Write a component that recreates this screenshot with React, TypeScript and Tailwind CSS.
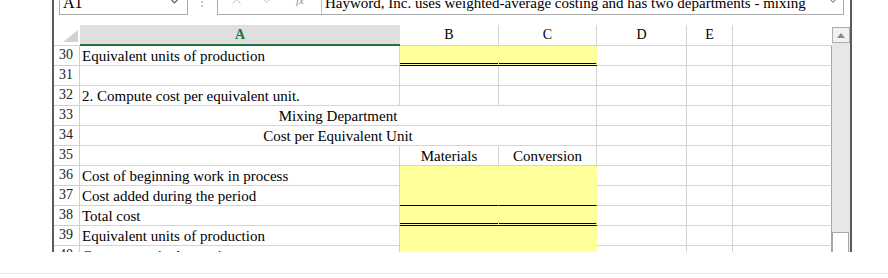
import React from 'react';
import { Check, ChevronDown, X } from 'lucide-react';

// yellow input cells, bottom edge variants
type Edge = 'fill' | 'single' | 'double';

const edgeClass: Record<Edge, string> = {
  fill: 'border-b border-b-[#ffff9c]',
  single: 'border-b border-b-black',
  double: 'border-b-[3px] border-double border-b-black',
};

function RowNum({ n }: { n: number }) {
  return (
    <div className="w-[26px] shrink-0 border-r border-b border-[#cfcfcf] pl-[5px] text-[14px] leading-[17px] text-[#222]">
      {n}
    </div>
  );
}

function Tail() {
  return (
    <>
      <div className="w-[90px] shrink-0 border-r border-b border-[#d4d4d4]" />
      <div className="w-[46px] shrink-0 border-r border-b border-[#d4d4d4]" />
      <div className="w-[99px] shrink-0 border-r border-b border-r-[#a6a6a6] border-b-[#d4d4d4]" />
    </>
  );
}

function Row({ n, children }: { n: number; children: React.ReactNode }) {
  return (
    <div className="flex h-[20px] shrink-0">
      <RowNum n={n} />
      {children}
      <Tail />
    </div>
  );
}

function LabelCell({ text }: { text?: string }) {
  return (
    <div className="w-[320px] shrink-0 whitespace-nowrap border-r border-b border-[#d4d4d4] pl-[2px] text-[15px] leading-[20px]">
      {text}
    </div>
  );
}

function BlankBC() {
  return (
    <>
      <div className="w-[99px] shrink-0 border-r border-b border-[#d4d4d4]" />
      <div className="w-[98px] shrink-0 border-r border-b border-[#d4d4d4]" />
    </>
  );
}

function InputBC({ edge }: { edge: Edge }) {
  return (
    <>
      <div className={`w-[99px] shrink-0 bg-[#ffff9c] border-r border-r-[#ffff9c] ${edgeClass[edge]}`} />
      <div className={`w-[98px] shrink-0 bg-[#ffff9c] border-r border-r-[#ffff9c] ${edgeClass[edge]}`} />
    </>
  );
}

function Toolbar() {
  return (
    <div className="flex h-[15px] shrink-0 items-end overflow-hidden">
      <div className="ml-[5px] flex h-[26px] w-[129px] shrink-0 items-end justify-between border border-[#ababab] pl-[3px] pr-[7px]">
        <span className="pb-[3px] text-[16px] leading-none">A1</span>
        <ChevronDown className="mb-[7px] text-[#555]" size={11} strokeWidth={2.5} />
      </div>
      <div className="ml-[12px] flex h-[15px] w-[3px] shrink-0 flex-col items-center gap-[2px] pt-[1px]">
        <div className="h-[2px] w-[2px] bg-[#c4c4c4]" />
        <div className="h-[2px] w-[2px] bg-[#c4c4c4]" />
      </div>
      <div className="ml-[14px] flex h-[26px] w-[627px] shrink-0 items-end border border-[#ababab]">
        <X className="mb-[7px] ml-[11px] text-[#bdbdbd]" size={15} strokeWidth={1.5} />
        <Check className="mb-[7px] ml-[17px] text-[#bdbdbd]" size={15} strokeWidth={1.5} />
        <span className="mb-[8px] ml-[20px] text-[11px] italic leading-none text-[#8a8a8a]">fx</span>
        <div className="ml-[17px] flex h-full flex-1 items-end overflow-hidden border-l border-[#c4c4c4] pl-[3px]">
          <span className="flex-1 whitespace-nowrap pb-[3px] text-[15px] leading-none">
            Hayword, Inc. uses weighted-average costing and has two departments - mixing
          </span>
          <ChevronDown className="mb-[8px] mr-[5px] shrink-0 text-[#777]" size={10} strokeWidth={2.5} />
        </div>
      </div>
    </div>
  );
}

function HeaderRow() {
  return (
    <div className="flex h-[21px] shrink-0 text-[14px] leading-[20px]">
      <div className="w-[26px] shrink-0 border-b border-[#d4d4d4]">
        <svg width="26" height="20" viewBox="0 0 26 20">
          <polygon points="24,5 24,17 9,17" fill="#d2d2d2" />
        </svg>
      </div>
      <div className="w-[320px] shrink-0 border-b-2 border-[#217346] bg-[#dfdfdf] text-center font-bold text-[#217346]">
        A
      </div>
      <div className="w-[99px] shrink-0 border-r border-b border-[#d4d4d4] text-center">B</div>
      <div className="w-[98px] shrink-0 border-r border-b border-[#d4d4d4] text-center">C</div>
      <div className="w-[90px] shrink-0 border-r border-b border-[#d4d4d4] text-center">D</div>
      <div className="w-[46px] shrink-0 border-r border-b border-[#d4d4d4] text-center">E</div>
      <div className="w-[99px] shrink-0 border-b border-[#d4d4d4]" />
    </div>
  );
}

function Scrollbar() {
  return (
    <div className="flex w-[18px] shrink-0 flex-col pt-[2px]">
      <div className="flex h-[16px] shrink-0 items-center justify-center border border-[#adadad] bg-[#f1f1f1]">
        <svg width="8" height="5" viewBox="0 0 8 5">
          <polygon points="4,0 8,5 0,5" fill="#8a8a8a" />
        </svg>
      </div>
      <div className="flex flex-1 flex-col justify-end bg-[#e7e7e7] pr-[1px]">
        <div className="h-[20px] border border-b-0 border-[#a8a8a8] bg-white" />
      </div>
    </div>
  );
}

export default function App() {
  return (
    <div className="h-[278px] w-[888px] overflow-hidden bg-white font-['Liberation_Serif',serif] text-black">
      <div className="ml-[52px] flex h-[252px] w-[800px] flex-col overflow-hidden border-x-2 border-[#5a5a5a]">
        <Toolbar />
        <div className="mt-[10px] flex min-h-0 flex-1">
          <div className="flex w-[778px] shrink-0 flex-col overflow-hidden">
            <HeaderRow />
            <Row n={30}>
              <LabelCell text="Equivalent units of production" />
              <InputBC edge="double" />
            </Row>
            <Row n={31}>
              <LabelCell />
              <BlankBC />
            </Row>
            <Row n={32}>
              <LabelCell text="2. Compute cost per equivalent unit." />
              <BlankBC />
            </Row>
            <Row n={33}>
              <div className="w-[517px] shrink-0 border-r border-b border-[#d4d4d4] text-center text-[15px] leading-[20px]">
                Mixing Department
              </div>
            </Row>
            <Row n={34}>
              <div className="w-[517px] shrink-0 border-r border-b border-[#d4d4d4] text-center text-[15px] leading-[20px]">
                Cost per Equivalent Unit
              </div>
            </Row>
            <Row n={35}>
              <LabelCell />
              <div className="w-[99px] shrink-0 border-r border-b border-[#d4d4d4] text-center text-[15px] leading-[20px]">
                Materials
              </div>
              <div className="w-[98px] shrink-0 border-r border-b border-[#d4d4d4] text-center text-[15px] leading-[20px]">
                Conversion
              </div>
            </Row>
            <Row n={36}>
              <LabelCell text="Cost of beginning work in process" />
              <InputBC edge="fill" />
            </Row>
            <Row n={37}>
              <LabelCell text="Cost added during the period" />
              <InputBC edge="single" />
            </Row>
            <Row n={38}>
              <LabelCell text="Total cost" />
              <InputBC edge="double" />
            </Row>
            <Row n={39}>
              <LabelCell text="Equivalent units of production" />
              <InputBC edge="fill" />
            </Row>
            <Row n={40}>
              <LabelCell text="Cost per equivalent unit" />
              <InputBC edge="fill" />
            </Row>
          </div>
          <Scrollbar />
        </div>
      </div>
      <div className="mt-[21px] h-px bg-[#ebebeb]" />
    </div>
  );
}
